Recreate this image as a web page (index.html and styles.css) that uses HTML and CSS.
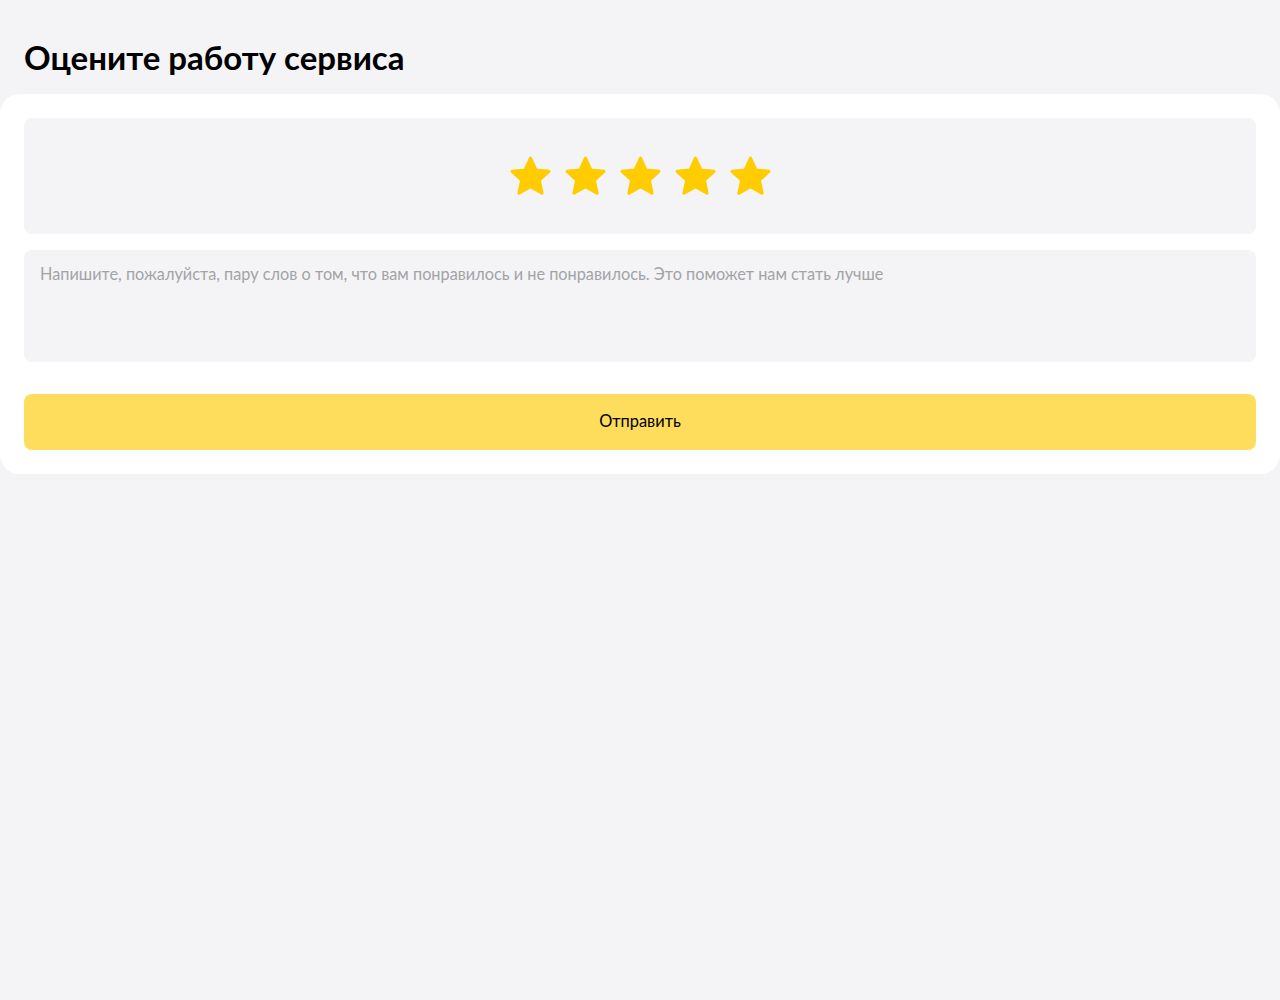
FILE: index.html
```html
<!DOCTYPE html>
<html lang="ru">
<head>
<meta charset="utf-8">
<title>Оцените работу сервиса</title>
<link rel="stylesheet" href="styles.css">
</head>
<body>
<main class="page">
  <h1 class="title">Оцените работу сервиса</h1>
  <section class="card">
    <div class="rating">
      <svg class="star" viewBox="0 0 24 24"><path d="M12 2.6l2.8 6.1 6.6.7-4.9 4.5 1.4 6.6L12 17.2l-5.9 3.3 1.4-6.6-4.9-4.5 6.6-.7z"/></svg>
      <svg class="star" viewBox="0 0 24 24"><path d="M12 2.6l2.8 6.1 6.6.7-4.9 4.5 1.4 6.6L12 17.2l-5.9 3.3 1.4-6.6-4.9-4.5 6.6-.7z"/></svg>
      <svg class="star" viewBox="0 0 24 24"><path d="M12 2.6l2.8 6.1 6.6.7-4.9 4.5 1.4 6.6L12 17.2l-5.9 3.3 1.4-6.6-4.9-4.5 6.6-.7z"/></svg>
      <svg class="star" viewBox="0 0 24 24"><path d="M12 2.6l2.8 6.1 6.6.7-4.9 4.5 1.4 6.6L12 17.2l-5.9 3.3 1.4-6.6-4.9-4.5 6.6-.7z"/></svg>
      <svg class="star" viewBox="0 0 24 24"><path d="M12 2.6l2.8 6.1 6.6.7-4.9 4.5 1.4 6.6L12 17.2l-5.9 3.3 1.4-6.6-4.9-4.5 6.6-.7z"/></svg>
    </div>
    <textarea class="comment" placeholder="Напишите, пожалуйста, пару слов о том, что вам понравилось и не понравилось. Это поможет нам стать лучше"></textarea>
    <button class="submit" type="button">Отправить</button>
  </section>
</main>
</body>
</html>
```
FILE: styles.css
```css
html, body {
  margin: 0;
  padding: 0;
  background: #f4f4f6;
  font-family: "Lato", "Noto Sans", sans-serif;
}
.page {
  padding-top: 36px;
}
.title {
  margin: 0 0 16px 24px;
  font-size: 33px;
  line-height: 42px;
  font-weight: 700;
  color: #000;
}
.card {
  background: #fff;
  border-radius: 20px;
  padding: 24px;
  display: flex;
  flex-direction: column;
}
.rating {
  height: 116px;
  background: #f4f4f6;
  border-radius: 8px;
  display: flex;
  justify-content: center;
  align-items: center;
  gap: 8px;
}
.star {
  width: 47px;
  height: 47px;
}
.star path {
  fill: #fc0;
  stroke: #fc0;
  stroke-width: 1.6;
  stroke-linejoin: round;
}
.comment {
  margin-top: 16px;
  height: 112px;
  box-sizing: border-box;
  border: none;
  outline: none;
  resize: none;
  background: #f4f4f6;
  border-radius: 8px;
  padding: 13px 16px;
  font-family: inherit;
  font-size: 16.3px;
  line-height: 22px;
  color: #000;
}
.comment::placeholder {
  color: #a3a3a6;
}
.submit {
  margin-top: 32px;
  height: 56px;
  padding: 0 0 3px;
  border: none;
  border-radius: 8px;
  background: #ffdd5c;
  font-family: inherit;
  font-size: 16.4px;
  color: #000;
  cursor: pointer;
}
```
